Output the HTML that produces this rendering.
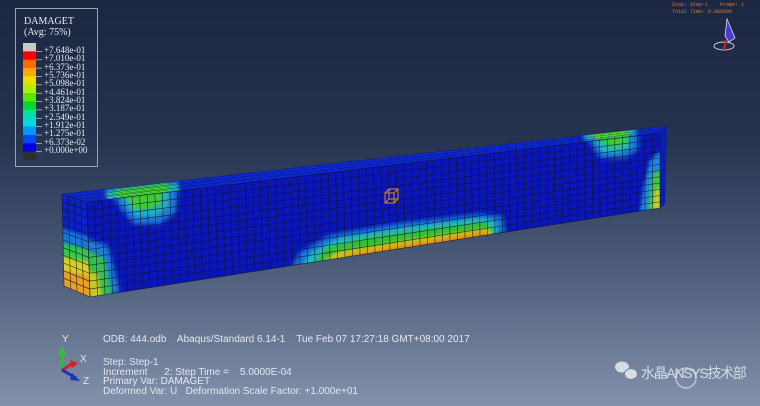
<!DOCTYPE html>
<html><head><meta charset="utf-8"><style>
html,body{margin:0;padding:0}
body{width:760px;height:406px;overflow:hidden;position:relative;background:linear-gradient(to bottom,#1c2741 0%,#263450 35%,#4b5b78 65%,#8391ab 100%);font-family:"Liberation Sans",sans-serif}
.leg{position:absolute;left:15px;top:8px;width:83px;height:159px;border:1px solid #9aa4b4;box-sizing:border-box}
.lt{position:absolute;font-family:"Liberation Serif",serif;color:#e8ecf2;font-size:9px;line-height:9px;white-space:nowrap}
.bt{position:absolute;color:#e4e8f0;font-size:10px;line-height:10px;white-space:nowrap}
</style></head><body>
<div class="leg"></div>
<div class="lt" style="left:24px;top:17px;font-size:10px">DAMAGET</div>
<div class="lt" style="left:24px;top:28px;font-size:10px">(Avg: 75%)</div>
<svg width="760" height="406" style="position:absolute;left:0;top:0" id="s">
<defs>
<filter id="b3" x="-50%" y="-50%" width="200%" height="200%"><feGaussianBlur stdDeviation="2.5"/></filter>
<filter id="b2" x="-50%" y="-50%" width="200%" height="200%"><feGaussianBlur stdDeviation="1.5"/></filter>
<clipPath id="cf"><polygon points="87,202 660,133 660,208 90,297"/></clipPath>
<clipPath id="ct"><polygon points="62,194 667,126 660,133 87,202"/></clipPath>
<clipPath id="cl"><polygon points="62,194 87,202 90,297 64,286"/></clipPath>
</defs>
<g id="bar"></g>
<polygon points="87,202 660,133 660,208 90,297" fill="#0a16b8"/>
<polygon points="62,194 667,126 660,133 87,202" fill="#0c28d4"/>
<polygon points="62,194 87,202 90,297 64,286" fill="#0a22c8"/>
<polygon points="660,133 667,126 665,204 660,208" fill="#0a1eb0"/>
<g clip-path="url(#ct)">
<polygon points="105,190 178,182 180,200 108,206" fill="#20b8c0" filter="url(#b2)"/>
<polygon points="115,190 168,183 168,200 118,205" fill="#40d030" filter="url(#b2)"/>
<polygon points="583,133 636,127 636,136 585,141" fill="#20b8c0" filter="url(#b2)"/>
<polygon points="592,132 628,128 628,137 594,140" fill="#50d830" filter="url(#b2)"/>
</g>
<g clip-path="url(#cf)">
<polygon points="112,195 178,187 176,212 160,224 134,224 122,210" fill="#1a7ad8" filter="url(#b3)"/>
<polygon points="120,195 170,189 168,208 156,216 136,216 126,206" fill="#22b0c0" filter="url(#b2)"/>
<polygon points="126,195 162,190 160,204 148,209 134,209" fill="#40cc30" filter="url(#b2)"/>
<polygon points="585,135 638,128 638,150 625,158 600,158" fill="#1a7ad8" filter="url(#b3)"/>
<polygon points="592,135 632,130 630,148 618,153 602,152" fill="#22b8b8" filter="url(#b2)"/>
<polygon points="596,135 628,131 626,144 610,147" fill="#40cc30" filter="url(#b2)"/>
<polygon points="650,160 662,150 662,210 640,212 644,185" fill="#1a8ad8" filter="url(#b2)"/>
<polygon points="652,175 662,168 662,210 648,210" fill="#40c840" filter="url(#b2)"/>
<polygon points="655,190 662,186 662,210 652,210" fill="#c8d020" filter="url(#b2)"/>
<polygon points="85,238 108,246 120,292 90,300" fill="#1f80d8" filter="url(#b3)"/>
<polygon points="85,250 104,258 112,294 90,300" fill="#30c050" filter="url(#b2)"/>
<polygon points="85,270 98,274 102,296 90,300" fill="#c8c820" filter="url(#b2)"/>
<polygon points="290,270 300,252 330,235 400,223 480,214 502,216 506,232 290,270" fill="#1878d8" filter="url(#b3)"/>
<polygon points="300,268 312,252 340,238 405,227 480,218 496,221 498,234 300,268" fill="#20b8c0" filter="url(#b2)"/>
<polygon points="312,266 326,248 365,238 430,229 485,222 494,234 312,266" fill="#30c030" filter="url(#b2)"/>
<polygon points="318,266 336,252 400,241 460,232 490,228 492,236 318,266" fill="#d0c018" filter="url(#b2)"/>
<polygon points="326,266 352,254 430,241 486,232 488,240 326,266" fill="#e88818" filter="url(#b2)"/>
</g>
<g clip-path="url(#cl)">
<polygon points="60,228 92,238 92,300 60,300" fill="#1878d8" filter="url(#b2)"/>
<polygon points="60,243 92,250 92,300 60,300" fill="#30c848" filter="url(#b2)"/>
<polygon points="60,256 92,263 92,300 60,300" fill="#d8d020" filter="url(#b2)"/>
<polygon points="60,270 92,276 92,300 60,300" fill="#e8a020" filter="url(#b2)"/>
</g>
<g id="mesh" stroke="#101028" stroke-width="0.6" stroke-opacity="0.85" fill="none"></g>
<g id="mesh2" stroke="#101028" stroke-width="0.5" stroke-opacity="0.5" fill="none"></g>
<g stroke="#e08a20" stroke-width="1" fill="none">
<rect x="385" y="193" width="9" height="10"/><rect x="389" y="189" width="9" height="10"/>
<line x1="385" y1="193" x2="389" y2="189"/><line x1="394" y1="193" x2="398" y2="189"/><line x1="385" y1="203" x2="389" y2="199"/><line x1="394" y1="203" x2="398" y2="199"/>
</g>
<line x1="62" y1="370" x2="62" y2="352" stroke="#30c030" stroke-width="3"/>
<line x1="62" y1="370" x2="72" y2="364" stroke="#d02020" stroke-width="3"/>
<line x1="62" y1="370" x2="76" y2="378" stroke="#2030c0" stroke-width="3"/>
<polygon points="58,354 62,346 66,354" fill="#30c030"/>
<polygon points="70,360 78,363 72,368" fill="#d02020"/>
<polygon points="72,373 80,381 70,380" fill="#2030c0"/>
<polygon points="727,19 735,38 729,42 725,36" fill="#4a3ad0" stroke="#d8d8f0" stroke-width="0.8"/>
<ellipse cx="724" cy="46" rx="10" ry="4" fill="none" stroke="#d0d4e8" stroke-width="0.9"/>
<line x1="724" y1="50" x2="726" y2="40" stroke="#d02020" stroke-width="2"/>
<g fill="#e8ecf2" opacity="0.85">
<ellipse cx="622" cy="367" rx="7" ry="5.5"/><ellipse cx="631" cy="374" rx="6.5" ry="5.5" stroke="#7080a0" stroke-width="1"/>
</g>
<circle cx="686" cy="378" r="10" fill="none" stroke="#d8dce6" stroke-width="1.5" opacity="0.7"/>
</svg>
<div class="lt" style="left:44px;top:46px">+7.648e-01</div>
<div class="lt" style="left:44px;top:54.3px">+7.010e-01</div>
<div class="lt" style="left:44px;top:62.7px">+6.373e-01</div>
<div class="lt" style="left:44px;top:71px">+5.736e-01</div>
<div class="lt" style="left:44px;top:79.3px">+5.098e-01</div>
<div class="lt" style="left:44px;top:87.7px">+4.461e-01</div>
<div class="lt" style="left:44px;top:96px">+3.824e-01</div>
<div class="lt" style="left:44px;top:104.3px">+3.187e-01</div>
<div class="lt" style="left:44px;top:112.7px">+2.549e-01</div>
<div class="lt" style="left:44px;top:121px">+1.912e-01</div>
<div class="lt" style="left:44px;top:129.3px">+1.275e-01</div>
<div class="lt" style="left:44px;top:137.7px">+6.373e-02</div>
<div class="lt" style="left:44px;top:146px">+0.000e+00</div>

<div class="bt" style="left:62px;top:335px">Y</div>
<div class="bt" style="left:80px;top:355px">X</div>
<div class="bt" style="left:83px;top:377px">Z</div>
<div class="bt" style="left:103px;top:335px">ODB: 444.odb &nbsp;&nbsp; Abaqus/Standard 6.14-1 &nbsp;&nbsp; Tue Feb 07 17:27:18 GMT+08:00 2017</div>
<div class="bt" style="left:103px;top:358px">Step: Step-1</div>
<div class="bt" style="left:103px;top:368px">Increment &nbsp;&nbsp;&nbsp;&nbsp; 2: Step Time = &nbsp;&nbsp; 5.0000E-04</div>
<div class="bt" style="left:103px;top:377px">Primary Var: DAMAGET</div>
<div class="bt" style="left:103px;top:387px">Deformed Var: U &nbsp; Deformation Scale Factor: +1.000e+01</div>
<div style="position:absolute;left:641px;top:363px;font-family:'Liberation Sans','Noto Sans CJK SC',sans-serif;font-size:14px;color:#e8ecf2;opacity:0.85;white-space:nowrap;letter-spacing:-1.3px">水晶ANSYS技术部</div>
<div style="position:absolute;left:672px;top:2px;font-family:'Liberation Mono',monospace;font-size:5px;line-height:7px;color:#d08030;white-space:pre">Step: Step-1    Frame: 1
Total Time: 0.000500</div>
<script>
var NS="http://www.w3.org/2000/svg";
var bar=document.getElementById("bar");
var cols=["#c8c8c8","#ff0000","#ff6a00","#ffa800","#e8e000","#b0f000","#58e800","#00d830","#00e0a0","#00d8e8","#0098ff","#0048ff","#0000e0","#303030"];
for(var i=0;i<14;i++){var r=document.createElementNS(NS,"rect");r.setAttribute("x",23);r.setAttribute("y",43+i*8.36);r.setAttribute("width",13);r.setAttribute("height",8.5);r.setAttribute("fill",cols[i]);bar.appendChild(r);}
for(var i=0;i<13;i++){var l=document.createElementNS(NS,"line");var y=51.4+i*8.36;l.setAttribute("x1",36);l.setAttribute("x2",42);l.setAttribute("y1",y);l.setAttribute("y2",y);l.setAttribute("stroke","#ccc");l.setAttribute("stroke-width","0.7");bar.appendChild(l);}
var cur;
function L(a,b){var l=document.createElementNS(NS,"line");l.setAttribute("x1",a[0]);l.setAttribute("y1",a[1]);l.setAttribute("x2",b[0]);l.setAttribute("y2",b[1]);cur.appendChild(l);}
function lerp(a,b,t){return [a[0]+(b[0]-a[0])*t,a[1]+(b[1]-a[1])*t];}
function grid(p00,p10,p11,p01,nu,nv){for(var i=0;i<=nu;i++){var t=i/nu;L(lerp(p00,p10,t),lerp(p01,p11,t));}for(var j=0;j<=nv;j++){var t=j/nv;L(lerp(p00,p01,t),lerp(p10,p11,t));}}
cur=document.getElementById("mesh");
grid([87,202],[660,133],[660,208],[90,297],76,12);
grid([62,194],[87,202],[90,297],[64,286],4,12);
cur=document.getElementById("mesh2");
grid([62,194],[667,126],[660,133],[87,202],76,3);
</script>
</body></html>
